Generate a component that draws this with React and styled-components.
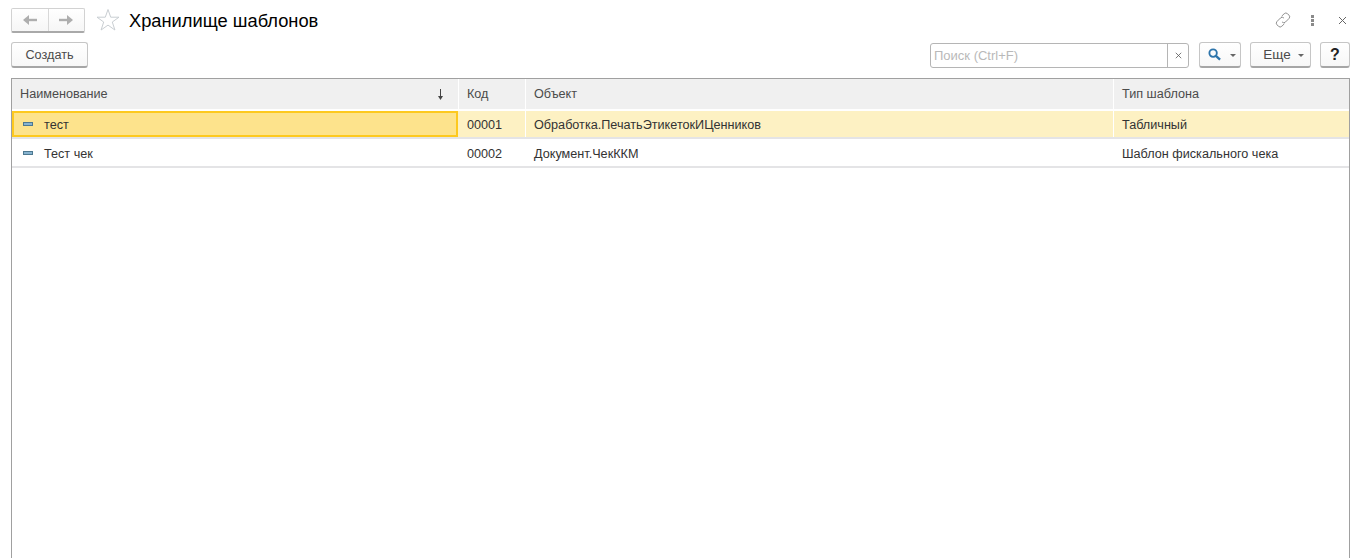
import React from 'react'
import styled, { createGlobalStyle } from 'styled-components'

const GlobalStyle = createGlobalStyle`
  html, body {
    margin: 0;
    height: 100%;
    background: #fff;
    overflow: hidden;
    font-family: "Liberation Sans", Arial, sans-serif;
  }
`

const Page = styled.div`
  width: 1368px;
  height: 558px;
  padding: 8px 18px 0 11px;
  box-sizing: border-box;
  display: flex;
  flex-direction: column;
  color: #333;
  font-size: 12.65px;
`

const TitleBar = styled.div`
  display: flex;
  align-items: center;
  height: 24px;
`

const NavGroup = styled.div`
  display: flex;
  width: 74px;
  height: 25px;
  box-sizing: border-box;
  border: 1px solid #d2d2d2;
  border-bottom: 2px solid #a9a9a9;
  border-radius: 2px;
  background: linear-gradient(#fff, #f6f6f6);
`

const NavButton = styled.div`
  flex: 1;
  display: flex;
  align-items: center;
  justify-content: center;
  & + & {
    border-left: 1px solid #d8d8d8;
  }
`

const StarWrap = styled.div`
  display: flex;
  margin-left: 11px;
  width: 24px;
`

const Title = styled.h1`
  margin: 2px 0 0 9px;
  font-size: 18.3px;
  font-weight: 400;
  color: #000;
`

const WindowTools = styled.div`
  margin-left: auto;
  display: flex;
  align-items: center;
  gap: 20px;
  padding-right: 3px;

  svg:last-child {
    margin-left: 4px;
  }
`

const CommandBar = styled.div`
  display: flex;
  align-items: center;
  height: 26px;
  margin-top: 10px;
`

const Button = styled.div`
  display: flex;
  align-items: center;
  justify-content: center;
  gap: ${({ $gap }) => $gap || 0}px;
  width: ${({ $w }) => $w}px;
  height: 26px;
  margin-left: ${({ $ml }) => $ml || 0}px;
  padding-left: ${({ $pl }) => $pl || 0}px;
  box-sizing: border-box;
  border: 1px solid #c6c6c6;
  border-bottom: 2px solid #a6a6a6;
  border-radius: 3px;
  background: linear-gradient(#fff, #f7f7f7);
  color: ${({ $strong }) => ($strong ? '#222' : '#4b4b4b')};
  font-size: ${({ $size }) => $size || 12.65}px;
  font-weight: ${({ $strong }) => ($strong ? 700 : 400)};
`

const Caret = styled.span`
  width: 0;
  height: 0;
  margin-top: 2px;
  border-left: 3px solid transparent;
  border-right: 3px solid transparent;
  border-top: 3px solid #666;
`

const Search = styled.div`
  display: flex;
  width: 259px;
  height: 25px;
  margin-left: auto;
  box-sizing: border-box;
  border: 1px solid #b5b5b5;
  border-radius: 3px;
  background: #fff;
`

const SearchText = styled.div`
  flex: 1;
  display: flex;
  align-items: center;
  padding-left: 3px;
  font-size: 13px;
  color: #b9b9b9;
`

const SearchClear = styled.div`
  width: 20px;
  flex: none;
  display: flex;
  align-items: center;
  justify-content: center;
  border-left: 1px solid #b5b5b5;
`

const Table = styled.div`
  flex: 1;
  margin-top: 10px;
  box-sizing: border-box;
  border: 1px solid #a0a0a0;
  border-bottom: 0;
  min-height: 0;
`

const Row = styled.div`
  display: grid;
  grid-template-columns: 447px 67px 588px 1fr;
  height: ${({ $h }) => $h}px;
  box-sizing: border-box;
  background: ${({ $bg }) => $bg || '#fff'};
  border-bottom: ${({ $line }) => ($line ? '2px solid #e4e4e6' : '0')};
`

const HeaderRow = styled(Row)`
  height: 32px;
  border-bottom: 2px solid #fff;
  background: #f0f0f0;
`

const HeadCell = styled.div`
  display: flex;
  align-items: center;
  justify-content: space-between;
  padding: 0 14px 0 8px;
  border-right: 1px solid #fff;
  box-sizing: border-box;
  color: #4b4b4b;
  &:last-child {
    border-right: 0;
  }
`

const Cell = styled.div`
  display: flex;
  align-items: center;
  padding: 1px 0 0 ${({ $first }) => ($first ? 10 : 8)}px;
  box-sizing: border-box;
  border-right: ${({ $sep }) => ($sep ? '1px solid #fff' : '0')};
  color: #333;
`

const PlainRow = styled(Row)`
  ${Cell} {
    padding-top: 2px;
  }
`

const CurrentCell = styled(Cell)`
  border: 2px solid #fdc91f;
  background: #fde38c;
  padding-left: 8px;
  margin-right: 1px;
`

const Marker = styled.span`
  width: 10px;
  height: 4px;
  margin: -2px 11px 0 1px;
  box-sizing: border-box;
  border: 1px solid #4d7890;
  background: #86b3d0;
`

const ArrowLeft = () => (
  <svg width="14" height="10" viewBox="0 0 14 10">
    <path d="M14 5H4" stroke="#aeaeae" strokeWidth="2.4" fill="none" />
    <path d="M6 0 0 5l6 5z" fill="#aeaeae" />
  </svg>
)

const ArrowRight = () => (
  <svg width="14" height="10" viewBox="0 0 14 10">
    <path d="M0 5h10" stroke="#aeaeae" strokeWidth="2.4" fill="none" />
    <path d="m8 0 6 5-6 5z" fill="#aeaeae" />
  </svg>
)

const Star = () => (
  <svg width="24" height="24" viewBox="0 0 24 24">
    <path
      d="M12 1.5 14.7 9.2H23L16.3 14l2.6 8L12 17.1 5.1 22l2.6-8L1 9.2h8.3z"
      fill="#fff"
      stroke="#c9ced2"
    />
  </svg>
)

const LinkIcon = () => (
  <svg width="16" height="16" viewBox="0 0 17 17" fill="none" stroke="#8a8a8a">
    <path d="M7 4.5 9.7 1.9a2.6 2.6 0 0 1 3.7 0l1.4 1.4a2.6 2.6 0 0 1 0 3.7l-3.6 3.6a2.6 2.6 0 0 1-3.7 0" />
    <path d="M10 12.5 7.3 15.1a2.6 2.6 0 0 1-3.7 0l-1.4-1.4a2.6 2.6 0 0 1 0-3.7l3.6-3.6a2.6 2.6 0 0 1 3.7 0" />
  </svg>
)

const Dots = () => (
  <svg width="3" height="11" viewBox="0 0 3 11" fill="#8a8a8a">
    <rect width="3" height="3" />
    <rect y="4" width="3" height="3" />
    <rect y="8" width="3" height="3" />
  </svg>
)

const Cross = ({ size = 9, color = '#666' }) => (
  <svg width={size} height={size} viewBox="0 0 9 9" stroke={color} fill="none">
    <path d="m1 1 7 7M8 1 1 8" />
  </svg>
)

const SearchIcon = () => (
  <svg width="13" height="13" viewBox="0 0 14 14" fill="none" stroke="#2d74ab">
    <circle cx="5.5" cy="5.5" r="4" strokeWidth="2" />
    <path d="m8.5 8.5 4.5 4" strokeWidth="2.6" />
  </svg>
)

const SortArrow = () => (
  <svg width="7" height="11" viewBox="0 0 7 11">
    <path d="M3.5 0v9" stroke="#444" fill="none" />
    <path d="M1 7h5L3.5 11z" fill="#444" />
  </svg>
)

const rows = [
  { name: 'тест', code: '00001', object: 'Обработка.ПечатьЭтикетокИЦенников', type: 'Табличный', current: true },
  { name: 'Тест чек', code: '00002', object: 'Документ.ЧекККМ', type: 'Шаблон фискального чека' },
]

const App = () => {
  return (
    <Page>
      <GlobalStyle />
      <TitleBar>
        <NavGroup>
          <NavButton><ArrowLeft /></NavButton>
          <NavButton><ArrowRight /></NavButton>
        </NavGroup>
        <StarWrap><Star /></StarWrap>
        <Title>Хранилище шаблонов</Title>
        <WindowTools>
          <LinkIcon />
          <Dots />
          <Cross />
        </WindowTools>
      </TitleBar>
      <CommandBar>
        <Button $w={77}>Создать</Button>
        <Search>
          <SearchText>Поиск (Ctrl+F)</SearchText>
          <SearchClear><Cross size={7} color="#555" /></SearchClear>
        </Search>
        <Button $w={42} $ml={10} $gap={9} $pl={3}><SearchIcon /><Caret /></Button>
        <Button $w={61} $ml={9} $gap={7} $pl={6} $size={13.5}>Еще<Caret /></Button>
        <Button $w={30} $ml={9} $size={16} $strong>?</Button>
      </CommandBar>
      <Table>
        <HeaderRow>
          <HeadCell>Наименование<SortArrow /></HeadCell>
          <HeadCell>Код</HeadCell>
          <HeadCell>Объект</HeadCell>
          <HeadCell>Тип шаблона</HeadCell>
        </HeaderRow>
        {rows.map((row) =>
          row.current ? (
            <Row key={row.code} $h={28} $bg="#fdf1c3" $line>
              <CurrentCell><Marker />{row.name}</CurrentCell>
              <Cell $sep>{row.code}</Cell>
              <Cell $sep>{row.object}</Cell>
              <Cell>{row.type}</Cell>
            </Row>
          ) : (
            <PlainRow key={row.code} $h={29} $line>
              <Cell $first><Marker />{row.name}</Cell>
              <Cell>{row.code}</Cell>
              <Cell>{row.object}</Cell>
              <Cell>{row.type}</Cell>
            </PlainRow>
          )
        )}
      </Table>
    </Page>
  )
}

export default App
